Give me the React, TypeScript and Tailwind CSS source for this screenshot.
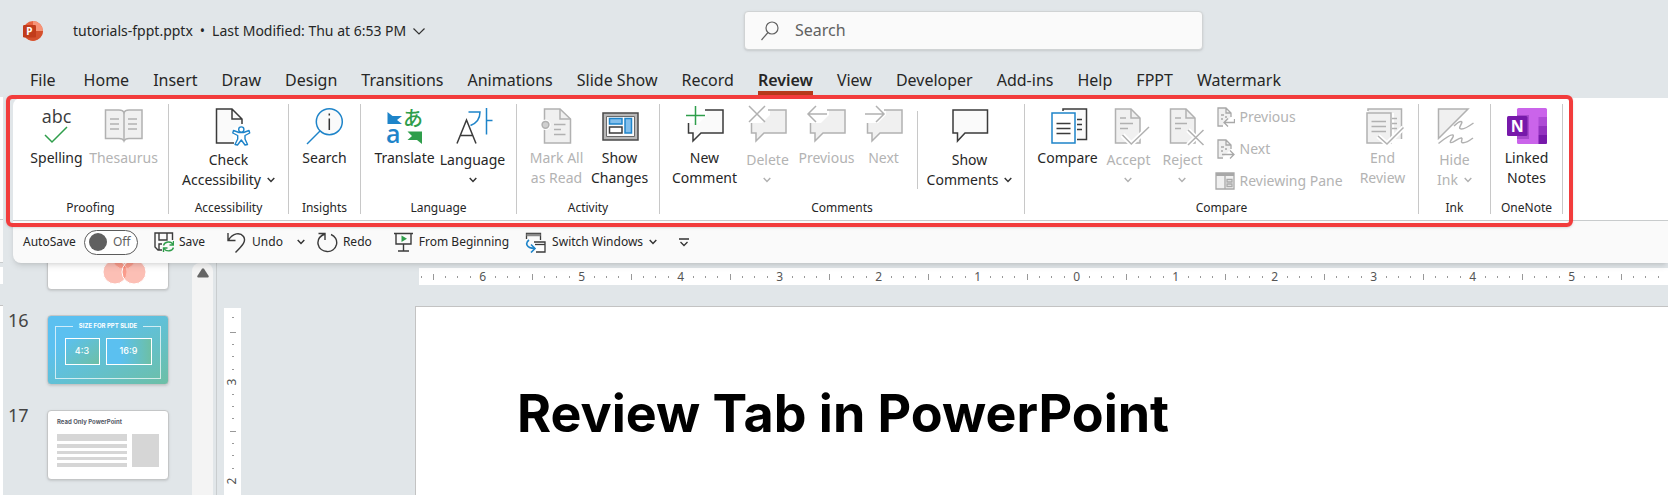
import React from 'react'
import clsx from 'clsx'

type IconProps = { children: React.ReactNode; dim?: boolean }

const Icon = ({ children, dim }: IconProps) => (
  <svg
    width="40"
    height="40"
    viewBox="0 0 40 40"
    fill="none"
    stroke={dim ? '#b1b1b1' : '#3b3b3b'}
    strokeWidth="1.5"
    className="overflow-visible"
    aria-hidden="true"
  >
    {children}
  </svg>
)

const Chevron = ({ dim }: { dim?: boolean }) => (
  <svg width="8" height="6" viewBox="0 0 8 6" fill="none" stroke={dim ? '#b1b1b1' : '#333'} strokeWidth="1.5" aria-hidden="true">
    <path d="M.7 1 4 4.4 7.3 1" />
  </svg>
)

const Bubble = ({ cut, dim }: { cut?: boolean; dim?: boolean }) => (
  <path
    d={cut ? 'M22 4H38V27H16L8 35V27H3.5V17L14 17L22 9Z' : 'M3 4H37.500V27H15L7.500 35V27H3Z'}
    fill={dim ? '#f0f0f0' : '#fafafa'}
    stroke="none"
  />
)

const BubbleLine = ({ cut }: { cut?: boolean }) => (
  <path d={cut ? 'M20 4H38V27H16L8 35V27H3.5V17' : 'M3 4H37.5V27H15L7.5 35V27H3Z'} />
)

const Page = ({ d, dim }: { d: string; dim?: boolean }) => <path d={d} fill={dim ? '#f0f0f0' : '#fafafa'} />

const SpellingIcon = () => (
  <Icon>
    <text x="19.500" y="17" textAnchor="middle" fontSize="18" fill="#3b3b3b" stroke="none" fontFamily="'Open Sans', sans-serif">
      abc
    </text>
    <path d="M8 29 15 36 30 21" stroke="#2f9e4b" />
  </Icon>
)

const ThesaurusIcon = () => (
  <Icon dim>
    <path d="M1.500 4H15Q19 4 20 6.500 21 4 25 4H38V32.500H25Q21 32.500 20 35 19 32.500 15 32.500H1.500Z" fill="#f0f0f0" />
    <path d="M20 6V35M6 13H15M6 18H15M6 23H15M24 13H33M24 18H33M24 23H33" />
  </Icon>
)

const AccessibilityIcon = () => (
  <Icon>
    <path d="M7.500 3H23L33 13V20L24 22V37H7.500Z" fill="#fafafa" stroke="none" />
    <path d="M25 37H7.500V3H23L33 13V18M23 3V13H33" />
    <g stroke="#1e84c9" fill="#fff" strokeWidth="1.400" strokeLinejoin="round">
      <path d="M24.500 24.500 30 26.500H34.500L40 24.500 40.700 27 36 29.500V33L38.500 38.500 36 39 32.300 34 28.500 39 26 38.500 28.700 33V29.500L23.800 27Z" />
      <circle cx="32.300" cy="23.500" r="2.600" />
    </g>
  </Icon>
)

const InsightsIcon = () => (
  <Icon>
    <circle cx="24.300" cy="15.700" r="13" fill="#fafafa" stroke="#1e84c9" />
    <path d="M15 25 2 38" stroke="#1e84c9" />
    <path d="M24.300 12.500V24M24.300 7.500V9.500" stroke="#333" />
  </Icon>
)

const TranslateIcon = () => (
  <Icon>
    <path d="M2.500 6 7.500 10H17L12 14 17 18H2.500Z" fill="#1e84c9" stroke="none" />
    <path d="M37 38 32 34H22.500L27 30 22.500 25.500H37Z" fill="#2f9e4b" stroke="none" />
    <text x="1" y="37" fontSize="25" fontWeight="600" fill="#1e84c9" stroke="none" fontFamily="'Open Sans', sans-serif">
      a
    </text>
    <text x="18" y="20" fontSize="20" fontWeight="500" fill="#2f9e4b" stroke="none" fontFamily="'Noto Sans CJK JP', sans-serif">
      あ
    </text>
  </Icon>
)

const LanguageIcon = () => (
  <Icon>
    <path d="M4 37.500 13.500 14 23 37.500M7.500 29.500H19.500" />
    <path d="M15.500 6H27C27 12 24 17 17.500 19.500M33.500 2V28.500M33.500 14.500H39.500" stroke="#1e84c9" />
  </Icon>
)

const MarkReadIcon = () => (
  <Icon dim>
    <Page dim d="M7.500 3H23L33.500 13V37H7.500Z" />
    <path d="M23 3V13H33.500M17 18.500H28.500M17 23.500H24M17 28.500H28.500" />
    <circle cx="8.500" cy="18.800" r="5.200" fill="#fff" stroke="none" />
    <circle cx="8.500" cy="18.800" r="3.400" fill="#d0d0d0" />
  </Icon>
)

const ShowChangesIcon = () => (
  <Icon>
    <path d="M3 7H38V34H3Z" fill="#b8b8b8" stroke="#4a4a4a" />
    <path d="M6.500 10.500H34.500V30.500H6.500Z" fill="#fafafa" stroke="#6a6a6a" strokeWidth="1" />
    <path d="M9.500 12.500H22V18H9.500ZM25 12.500H31.500V27H25Z" fill="#83bfec" stroke="#1e84c9" />
    <path d="M9.500 21H22V27H9.500Z" fill="#fff" />
  </Icon>
)

const NewCommentIcon = () => (
  <Icon>
    <Bubble cut />
    <BubbleLine cut />
    <path d="M10.500 0V19M1 9.500H20" stroke="#2f9e4b" />
  </Icon>
)

const DeleteCommentIcon = () => (
  <Icon dim>
    <Bubble cut dim />
    <BubbleLine cut />
    <path d="M1 0 17 16M17 0 1 16" />
  </Icon>
)

const PreviousCommentIcon = () => (
  <Icon dim>
    <Bubble cut dim />
    <BubbleLine cut />
    <path d="M20 8H1M9 0 1 8 9 16" />
  </Icon>
)

const NextCommentIcon = () => (
  <Icon dim>
    <Bubble cut dim />
    <BubbleLine cut />
    <path d="M1 8H20M12 0 20 8 12 16" />
  </Icon>
)

const ShowCommentsIcon = () => (
  <Icon>
    <Bubble />
    <BubbleLine />
  </Icon>
)

const CompareIcon = () => (
  <Icon>
    <path d="M15 5V3H38.500V33.500H29V5Z" fill="#fafafa" stroke="none" />
    <path d="M15 5V3H38.500V33.500H29M29 13.500H34M29 18.500H34M29 23.500H34" />
    <path d="M4 7H27V37H4Z" fill="#fff" stroke="#1e84c9" />
    <path d="M8.500 17.500H22.500M8.500 22.500H22.500M8.500 27.500H22.500" />
  </Icon>
)

const AcceptIcon = () => (
  <Icon dim>
    <Page dim d="M6.500 3H22L31 12V37H6.500Z" />
    <path d="M22 3V12H31M11 12H17M11 17.500H24M11 22.500H19" />
    <path d="M13.500 29 22.300 38 40 21" stroke="#fff" strokeWidth="5" />
    <path d="M13.500 29 22.300 38 40 21" />
  </Icon>
)

const RejectIcon = () => (
  <Icon dim>
    <Page dim d="M7.500 3H23L32 12V37H7.500Z" />
    <path d="M23 3V12H32M12 12H18M12 17.500H24M12 22.500H18" />
    <path d="M25 24 40.500 39M40.500 24 25 39" stroke="#fff" strokeWidth="5" />
    <path d="M25 24 40.500 39M40.500 24 25 39" />
  </Icon>
)

const EndReviewIcon = () => (
  <Icon dim>
    <path d="M5 5V3H38.500V33H31V7H5" fill="#f0f0f0" stroke="none" />
    <path d="M5 5V3H38.500V33M29 12.500H34M29 17.500H34M29 22.500H34" />
    <path d="M4 7H28V37H4Z" fill="#f0f0f0" />
    <path d="M8.500 15.500H23M8.500 20.500H23M8.500 25.500H23" />
    <path d="M15 30 24 38 40.500 21.500" stroke="#fff" strokeWidth="5" />
    <path d="M15 30 24 38 40.500 21.500" />
  </Icon>
)

const HideInkIcon = () => (
  <Icon dim>
    <path d="M3.500 3H33L3.500 32.500Z" fill="#f0f0f0" />
    <path d="M38.500 17C33 21 27 24 25 22.500 23 21 29 16 26 15.500 24.500 15.500 21 18 19 20" />
    <path d="M3.500 37.500C9 33 16 28 18 29 20 30.500 14 35 15.500 36.500 17.500 38 24 31 26.500 32 28.500 33 25 35.500 27 36.500 30 37.500 34 35 38 32" />
  </Icon>
)

const OneNoteIcon = () => (
  <Icon>
    <g stroke="none">
      <rect x="10" y="2" width="30" height="36" rx="1.500" fill="#ca64ea" />
      <path d="M31.500 11H40V20H31.500Z" fill="#ae4bd5" />
      <path d="M31.500 20H40V29H31.500Z" fill="#9332bf" />
      <path d="M31.500 29H40V36.500Q40 38 38.500 38H31.500Z" fill="#7719aa" />
      <path d="M10 9H22V33H10Z" fill="#9a3fc0" opacity=".7" />
      <rect x="0" y="10" width="20.500" height="20" rx="1.500" fill="#7719aa" />
      <text x="10.200" y="26" fontSize="16" fontWeight="700" textAnchor="middle" fill="#fff" fontFamily="'Noto Sans', sans-serif">
        N
      </text>
    </g>
  </Icon>
)

type ToolProps = {
  icon: React.ReactNode
  lines: string[]
  width: string
  disabled?: boolean
  menu?: boolean
}

const Tool = ({ icon, lines, width, disabled, menu }: ToolProps) => (
  <button
    type="button"
    disabled={disabled}
    className={clsx(
      'flex shrink-0 flex-col items-center text-[14px] leading-5 whitespace-nowrap',
      width,
      disabled ? 'text-[#b3b3b3]' : 'text-[#262626]',
      menu ? 'gap-1' : 'gap-[2px]'
    )}
  >
    {icon}
    <span className="flex flex-col items-center">
      {lines.map((line, i) => (
        <span key={i} className="flex h-5 items-center gap-[6px]">
          {line}
          {menu && i === lines.length - 1 ? <Chevron dim={disabled} /> : null}
        </span>
      ))}
    </span>
  </button>
)

type GroupProps = { title: string; width: string; wide?: boolean; children: React.ReactNode }

const Group = ({ title, width, wide, children }: GroupProps) => (
  <section aria-label={title} className={clsx('flex shrink-0', width)}>
    <div className="flex min-w-0 flex-1 flex-col pt-2">
      <div className={clsx('flex h-[93px] items-start justify-center', wide && 'pl-1')}>{children}</div>
      <h2 className="text-center text-[12px] leading-[18px] text-[#262626]">{title}</h2>
    </div>
    <div className="mt-[6px] h-[110px] w-px bg-[#c8c8c8]" />
  </section>
)

const tabs = [
  'Home',
  'Insert',
  'Draw',
  'Design',
  'Transitions',
  'Animations',
  'Slide Show',
  'Record',
  'Review',
  'View',
  'Developer',
  'Add-ins',
  'Help',
  'FPPT',
  'Watermark',
]

const RowTool = ({ label, kind }: { label: string; kind: 'prev' | 'next' | 'pane' }) => (
  <button type="button" disabled className="flex h-5 items-center gap-[5px] text-[14px] leading-5 whitespace-nowrap text-[#b3b3b3]">
    <svg width="20" height="20" viewBox="0 0 20 20" fill="none" stroke="#a8a8a8" strokeWidth="1.300" className="shrink-0" aria-hidden="true">
      {kind === 'pane' ? (
        <>
          <path d="M1 2H19V18H1Z" fill="#f0f0f0" />
          <path d="M1 3.500H19" strokeWidth="3" />
          <path d="M10 5V18M12 8.500H17V11H12ZM12 13H17V15.500H12Z" />
        </>
      ) : (
        <>
          <path d="M3 1H11L16 6V10L8 18H3Z" fill="#f0f0f0" stroke="none" />
          <path d="M8 19H3V1H11L16 6V10M11 1V6H16M6 8H9M6 12H8M10 10H12" />
          {kind === 'prev' ? <path d="M19.500 12V15.500H9.500M13 11.500 9 15.500 13 19.500" /> : <path d="M7 15.500H19M15 11.500 19 15.500 15 19.500" />}
        </>
      )}
    </svg>
    {label}
  </button>
)

const TitleBar = () => (
  <div className="flex h-[61px] items-center">
    <div className="flex flex-1 items-center pl-[23px]">
      <svg width="20" height="20" viewBox="0 0 20 20" aria-hidden="true">
        <circle cx="10" cy="10" r="10" fill="#e8633f" />
        <path d="M10 0A10 10 0 0 1 20 10H10Z" fill="#f79477" />
        <path d="M0 10H20A10 10 0 0 1 1 14Z" fill="#d3502d" />
        <rect x="0" y="4" width="13" height="12.500" rx="1.200" fill="#c23c1b" />
        <text x="6.400" y="14" fontSize="10" fontWeight="700" textAnchor="middle" fill="#fff" fontFamily="'Noto Sans', sans-serif">
          P
        </text>
      </svg>
      <button type="button" className="ml-[30px] flex items-center gap-[7px] text-[14px] leading-5 whitespace-nowrap text-[#262626]">
        <span>tutorials-fppt.pptx</span>
        <span>•</span>
        <span>Last Modified: Thu at 6:53 PM</span>
        <svg width="12" height="8" viewBox="0 0 12 8" fill="none" stroke="#333" strokeWidth="1.200" aria-hidden="true">
          <path d="M.5 1.500 6 7 11.500 1.500" />
        </svg>
      </button>
    </div>
    <label className="flex h-[39px] w-[459px] items-center gap-4 rounded border border-[#d0d3d4] bg-[#fafafa] px-4 shadow">
      <svg width="18" height="20" viewBox="0 0 18 20" fill="none" stroke="#616161" strokeWidth="1.200" aria-hidden="true">
        <circle cx="11" cy="7" r="6" />
        <path d="M7 11.500.5 19" />
      </svg>
      <input aria-label="Search" placeholder="Search" className="min-w-0 flex-1 pb-[2px] text-[16px] leading-5 outline-none placeholder:text-[#616161]" />
    </label>
    <div className="w-[465px]" />
  </div>
)

const Ribbon = () => (
  <div className="rounded-tl-lg border-b border-[#c9cccd] bg-white">
    <div className="relative flex h-[122px] w-fit">
      <Group title="Proofing" width="w-[156px]">
        <Tool icon={<SpellingIcon />} lines={['Spelling']} width="w-[66px]" />
        <Tool icon={<ThesaurusIcon />} lines={['Thesaurus']} width="w-[68px]" disabled />
      </Group>
      <Group title="Accessibility" width="w-[120px]">
        <Tool icon={<AccessibilityIcon />} lines={['Check', 'Accessibility']} width="w-[110px]" menu />
      </Group>
      <Group title="Insights" width="w-[72px]">
        <Tool icon={<InsightsIcon />} lines={['Search']} width="w-[60px]" />
      </Group>
      <Group title="Language" width="w-[156px]">
        <Tool icon={<TranslateIcon />} lines={['Translate']} width="w-[68px]" />
        <Tool icon={<LanguageIcon />} lines={['Language', '']} width="w-[68px]" menu />
      </Group>
      <Group title="Activity" width="w-[143px]">
        <Tool icon={<MarkReadIcon />} lines={['Mark All', 'as Read']} width="w-[63px]" disabled />
        <Tool icon={<ShowChangesIcon />} lines={['Show', 'Changes']} width="w-[63px]" />
      </Group>
      <Group title="Comments" width="w-[365px]" wide>
        <Tool icon={<NewCommentIcon />} lines={['New', 'Comment']} width="w-[66px]" />
        <Tool icon={<DeleteCommentIcon />} lines={['Delete', '']} width="w-[60px]" disabled menu />
        <Tool icon={<PreviousCommentIcon />} lines={['Previous']} width="w-[58px]" disabled />
        <Tool icon={<NextCommentIcon />} lines={['Next']} width="w-[56px]" disabled />
        <div className="mx-[5px] mt-[5px] h-[78px] w-px bg-[#c8c8c8]" />
        <Tool icon={<ShowCommentsIcon />} lines={['Show', 'Comments']} width="w-[94px]" menu />
      </Group>
      <Group title="Compare" width="w-[394px]" wide>
        <Tool icon={<CompareIcon />} lines={['Compare']} width="w-[62px]" />
        <Tool icon={<AcceptIcon />} lines={['Accept', '']} width="w-[60px]" disabled menu />
        <Tool icon={<RejectIcon />} lines={['Reject', '']} width="w-[48px]" disabled menu />
        <div className="mr-3 ml-2 flex w-[128px] flex-col gap-3 pt-px">
          <RowTool label="Previous" kind="prev" />
          <RowTool label="Next" kind="next" />
          <RowTool label="Reviewing Pane" kind="pane" />
        </div>
        <Tool icon={<EndReviewIcon />} lines={['End', 'Review']} width="w-[56px]" disabled />
      </Group>
      <Group title="Ink" width="w-[72px]">
        <Tool icon={<HideInkIcon />} lines={['Hide', 'Ink']} width="w-[60px]" disabled menu />
      </Group>
      <Group title="OneNote" width="w-[72px]">
        <Tool icon={<OneNoteIcon />} lines={['Linked', 'Notes']} width="w-[60px]" />
      </Group>
      {/* highlight frame round the whole ribbon */}
      <div className="pointer-events-none absolute -top-[3px] -right-[10px] -bottom-[7px] -left-[7px] z-20 rounded-md border-4 border-[#f23c3c] shadow-sm" />
    </div>
  </div>
)

const QuickAccess = () => (
  <div className="relative z-10 flex h-[42px] items-center rounded-bl-lg bg-[#fafafa] pl-[10px] text-[12px] whitespace-nowrap text-[#262626] shadow-md">
    <label className="flex items-center gap-2">
      AutoSave
      <span className="relative flex h-[25px] w-[54px] items-center rounded-full border border-[#5c5c5c] bg-white pl-1">
        <input type="checkbox" role="switch" className="absolute inset-0 appearance-none" />
        <span className="size-[18px] rounded-full bg-[#606060]" />
        <span className="ml-[6px] text-[#616161]">Off</span>
      </span>
    </label>
    <button type="button" className="ml-4 flex items-center gap-[5px]">
      <svg width="20" height="20" viewBox="0 0 20 20" fill="none" stroke="#3b3b3b" strokeWidth="1.400" aria-hidden="true">
        <path d="M8 18H4L1 15V1H18.500V8M5 1V8H13V1M5 18V12H8" />
        <g stroke="#2f9e4b">
          <path d="M9.500 13.500C10.500 9.500 17 8.500 19 12.500M19.500 9V13H15.500M19.500 15.500C18.500 19.500 12 20 10 16.500M9.500 20V16H13.500" />
        </g>
      </svg>
      Save
    </button>
    <button type="button" className="ml-[22px] flex items-center gap-[6px]">
      <svg width="19" height="21" viewBox="0 0 19 21" fill="none" stroke="#3b3b3b" strokeWidth="1.400" aria-hidden="true">
        <path d="M1 1V8.500H8.500M1.500 8C6 1 13 0 16.500 4.500 19.500 9 16 13 8.500 20.500" />
      </svg>
      Undo
    </button>
    <button type="button" aria-label="Undo history" className="ml-[14px]">
      <Chevron />
    </button>
    <button type="button" className="ml-3 flex items-center gap-[5px]">
      <svg width="21" height="21" viewBox="0 0 21 21" fill="none" stroke="#3b3b3b" strokeWidth="1.400" aria-hidden="true">
        <path d="M1.500 1.500H8V8M8 2C2.500 4 .5 8 1 12 3 21.500 17 22.500 19.500 12.500 20.500 8 18 4 14 2.500" />
      </svg>
      Redo
    </button>
    <button type="button" className="ml-[22px] flex items-center gap-[6px]">
      <svg width="19" height="20" viewBox="0 0 19 20" fill="none" stroke="#3b3b3b" strokeWidth="1.400" aria-hidden="true">
        <path d="M0 1.500H19M2 1.500V12H17V1.500M9.500 12V18.500M4 19H15" />
        <path d="M7.500 3.500 13 6.800 7.500 10Z" fill="#2f9e4b" stroke="none" />
      </svg>
      From Beginning
    </button>
    <button type="button" className="ml-4 flex items-center gap-[6px]">
      <svg width="21" height="21" viewBox="0 0 21 21" fill="none" stroke="#3b3b3b" strokeWidth="1.300" aria-hidden="true">
        <path d="M1.500 7V1.500H15.500V8" />
        <path d="M1.500 3H15.500" stroke="#8a8a8a" strokeWidth="2.500" />
        <path d="M9 10H20V20H11" fill="#fff" />
        <path d="M10 12.500H20" />
        <path d="M4 8C0 11 1 16 9.500 16.500M6 12.500 10 16.500 6 20.500" stroke="#1e84c9" strokeWidth="1.600" />
      </svg>
      Switch Windows
      <Chevron />
    </button>
    <button type="button" aria-label="Customize Quick Access Toolbar" className="ml-[22px]">
      <svg width="10" height="9" viewBox="0 0 10 9" fill="none" stroke="#333" strokeWidth="1.300" aria-hidden="true">
        <path d="M0 1H10M1.500 4 5 7.500 8.500 4" />
      </svg>
    </button>
  </div>
)

const Thumbnail = ({ n, children, className }: { n?: string; children: React.ReactNode; className?: string }) => (
  <div className="flex h-[95px] shrink-0 items-start">
    <span className="w-[39px] text-[18px] leading-[11px] text-[#444]">{n}</span>
    <div className={clsx('h-[70px] w-[122px] overflow-hidden rounded border border-[#c4c6c7] shadow-sm', className)}>{children}</div>
  </div>
)

const Thumbnails = () => (
  <nav aria-label="Slides" className="flex w-[189px] shrink-0 flex-col pl-[5px]">
    {/* this slide is scrolled up under the toolbar */}
    <div className="flex h-[52px] shrink-0 flex-col justify-end overflow-hidden">
      <Thumbnail className="bg-white">
        <svg width="120" height="68" viewBox="0 0 120 68" aria-hidden="true">
          <g fill="#f9705c" fillOpacity=".45" stroke="#fff">
            <circle cx="76" cy="36" r="12" />
            <circle cx="67" cy="51" r="12" />
            <circle cx="86" cy="51" r="12" />
          </g>
        </svg>
      </Thumbnail>
    </div>
    <Thumbnail n="16" className="bg-linear-to-br from-[#5bc0f0] from-25% to-[#6dbfa5]">
      <div className="p-[7px] pt-[7px]">
        <fieldset className="flex h-[56px] items-start justify-center gap-[6px] border border-white/70 pt-[9px]">
          <legend className="mx-auto px-[6px] font-['Inter'] text-[6px] leading-none font-bold text-white">SIZE FOR PPT SLIDE</legend>
          <div className="h-[27px] w-[35px] border border-white bg-linear-to-br from-[#5bc0f0] to-[#6dbfa5] pt-[7px] text-center font-['Inter'] text-[9px] leading-none font-medium text-white">
            4:3
          </div>
          <div className="h-[27px] w-[46px] border border-white bg-linear-to-r from-[#5bc0f0] from-30% to-[#6dbfa5] pt-[7px] text-center font-['Inter'] text-[9px] leading-none font-medium text-white">
            16:9
          </div>
        </fieldset>
      </div>
    </Thumbnail>
    <Thumbnail n="17" className="bg-white">
      <div className="px-[9px] pt-[8px]">
        <p className="font-['Inter'] text-[6px] leading-none font-bold text-[#555a66]">Read Only PowerPoint</p>
        <div className="mt-[9px] flex gap-[5px]">
          <div className="flex w-[70px] flex-col gap-[3px]">
            <div className="h-[7px] bg-[#d6d6d6]" />
            <div className="h-[4px] bg-[#d6d6d6]" />
            <div className="h-[3px] bg-[#d6d6d6]" />
            <div className="h-[3px] bg-[#d6d6d6]" />
            <div className="h-[4px] bg-[#d6d6d6]" />
          </div>
          <div className="h-[33px] w-[27px] bg-[#d6d6d6]" />
        </div>
      </div>
    </Thumbnail>
  </nav>
)

const HorizontalRuler = () => (
  <div className="ml-[202px] flex h-[17px] overflow-hidden bg-white text-[12px] text-[#555]">
    <div className="flex w-2 shrink-0 items-center pl-[2px]">
      <span className="h-[2px] w-px bg-[#999]" />
    </div>
    {['6', '5', '4', '3', '2', '1', '0', '1', '2', '3', '4', '5', ''].map((n, i) => (
      <div key={i} className="grid w-[99px] shrink-0 grid-cols-8 place-items-center">
        <span className="h-[6px] w-px bg-[#999]" />
        <span className="h-[2px] w-px bg-[#999]" />
        <span className="h-[2px] w-px bg-[#999]" />
        <span className="h-[2px] w-px bg-[#999]" />
        <span className="leading-[17px]">{n}</span>
        <span className="h-[2px] w-px bg-[#999]" />
        <span className="h-[2px] w-px bg-[#999]" />
        <span className="h-[2px] w-px bg-[#999]" />
      </div>
    ))}
  </div>
)

const VerticalRuler = () => (
  <div className="mt-[2px] ml-[7px] w-[17px] shrink-0 overflow-hidden bg-white text-[12px] text-[#555]">
    <div className="flex h-[18px] items-center justify-center">
      <span className="h-px w-[2px] bg-[#999]" />
    </div>
    <div className="grid h-[99px] grid-rows-8 place-items-center">
      <span className="h-px w-[6px] bg-[#999]" />
      <span className="h-px w-[2px] bg-[#999]" />
      <span className="h-px w-[2px] bg-[#999]" />
      <span className="h-px w-[2px] bg-[#999]" />
      <span className="-rotate-90 leading-3">3</span>
      <span className="h-px w-[2px] bg-[#999]" />
      <span className="h-px w-[2px] bg-[#999]" />
      <span className="h-px w-[2px] bg-[#999]" />
    </div>
    <div className="grid h-[62px] grid-rows-5 place-items-center">
      <span className="h-px w-[6px] bg-[#999]" />
      <span className="h-px w-[2px] bg-[#999]" />
      <span className="h-px w-[2px] bg-[#999]" />
      <span className="h-px w-[2px] bg-[#999]" />
      <span className="-rotate-90 leading-3">2</span>
    </div>
  </div>
)

const Workspace = () => (
  <div className="flex h-0 min-h-[200px] flex-1 overflow-hidden">
    <Thumbnails />
    <div className="flex w-[21px] shrink-0 flex-col items-center rounded-t-lg bg-[#f4f4f4] pt-[5px]">
      <svg width="12" height="10" viewBox="0 0 12 10" fill="#666" aria-hidden="true">
        <path d="M5 .8Q6-.5 7 .8L11.700 8Q12 9.500 10.800 9.500H1.200Q0 9.500.3 8Z" />
      </svg>
    </div>
    <div className="ml-[3px] w-px bg-[#c9cdcf]" />
    <div className="flex min-w-0 flex-1 flex-col pt-[5px]">
      <HorizontalRuler />
      <div className="mt-[21px] flex min-h-0 flex-1">
        <VerticalRuler />
        <main className="ml-[174px] min-w-0 flex-1 border-t border-l border-[#c3c3c3] bg-white pt-[73px] pl-[101px]">
          <h1 className="font-['Inter'] text-[52px] leading-[68px] font-bold whitespace-nowrap text-black">Review Tab in PowerPoint</h1>
        </main>
      </div>
    </div>
  </div>
)

// sliver of the window behind, visible along the left edge
const BackWindowEdge = () => (
  <div className="flex w-[3px] shrink-0 flex-col overflow-hidden">
    <div className="h-[123px] border-b border-[#c9cccd] bg-white" />
    <div className="h-[43px] border-b border-[#c9cccd] bg-[#fafafa]" />
    <div className="mt-1 h-[17px] bg-white" />
    <div className="mt-[21px] flex-1 border-t border-[#c3c3c3] bg-white" />
  </div>
)

const App = () => {
  return (
    <div className="flex min-h-screen flex-col overflow-hidden bg-[#e1e6e9] font-['Noto_Sans','Open_Sans',sans-serif]">
      <TitleBar />
      <nav
        aria-label="Ribbon tabs"
        className="flex h-9 items-start gap-6 pl-[30px] text-[16px] leading-[38px] whitespace-nowrap text-[#262626]"
      >
        <a href="#file" className="mr-1">
          File
        </a>
        {tabs.map((tab) => (
          <a key={tab} href={`#${tab}`} className={clsx('h-[34px]', tab === 'Review' && 'border-b-4 border-[#b7391b] font-semibold')}>
            {tab}
          </a>
        ))}
      </nav>
      <div className="flex flex-1">
        <BackWindowEdge />
        <div className="flex min-w-0 flex-1 flex-col">
          <div className="relative z-10 pt-px pl-[10px]">
            <Ribbon />
            <QuickAccess />
          </div>
          <Workspace />
        </div>
      </div>
    </div>
  )
}

export default App
